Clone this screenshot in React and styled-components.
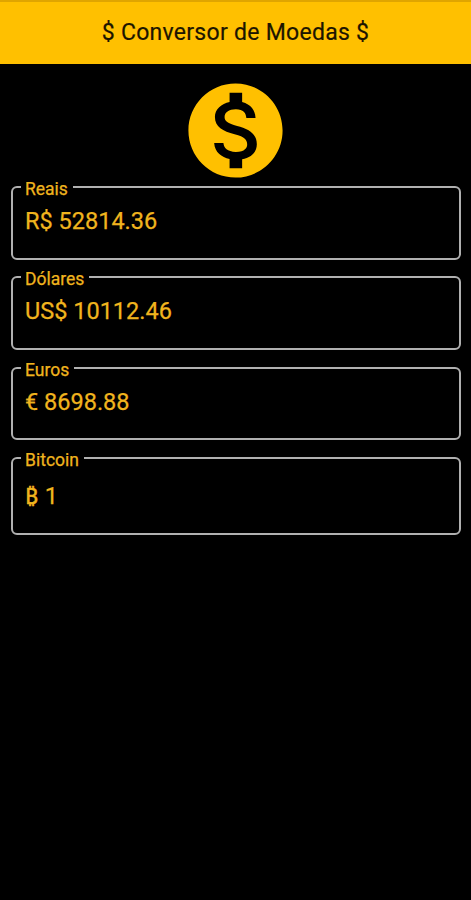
import React from "react";
import styled, { createGlobalStyle } from "styled-components";

const GlobalStyle = createGlobalStyle`
  body {
    margin: 0;
    background-color: #000;
  }
`;

const Screen = styled.div`
  min-height: 100vh;
  display: flex;
  flex-direction: column;
  background-color: #000;
  font-family: Roboto, "Liberation Sans", sans-serif;
`;

const AppBar = styled.header`
  box-sizing: border-box;
  height: 64px;
  display: flex;
  align-items: center;
  justify-content: center;
  background-color: #ffc000;
  border-top: 2px solid #e0a500;
`;

const Title = styled.h1`
  margin: 0;
  color: #1c1500;
  font-size: 23px;
  font-weight: 400;
  line-height: 28px;
  letter-spacing: 0.28px;
  white-space: nowrap;
  -webkit-text-stroke: 0.2px #1c1500;
`;

const Content = styled.main`
  display: flex;
  flex-direction: column;
  padding: 10px 10px 0 11px;
`;

const Coin = styled.svg`
  width: 113px;
  height: 113px;
  margin: 0 1px -10px 0;
  align-self: center;
  fill: #ffc000;
`;

// the top border runs through the middle of the legend
const Field = styled.fieldset`
  box-sizing: border-box;
  height: ${props => props.$height || 82.6}px;
  min-width: 0;
  margin: 0 0 7.8px;
  padding: 0 12px;
  border: 2px solid #b0b0b0;
  border-radius: 6px;
`;

const Label = styled.legend`
  box-sizing: border-box;
  height: 20px;
  margin-left: -4px;
  padding: 2px 5px 0 4px;
  color: #f0b41e;
  font-size: 17.5px;
  line-height: 20px;
  -webkit-text-stroke: 0.25px #f0b41e;
`;

const Value = styled.div`
  padding-top: ${props => props.$top || 10}px;
  color: #f0b41e;
  font-family: Roboto, "Noto Sans", "Liberation Sans", sans-serif;
  font-size: 23.5px;
  line-height: 28px;
  white-space: nowrap;
  -webkit-text-stroke: 0.25px #f0b41e;
`;

const BitcoinSign = styled.span`
  margin-right: 1px;
  font-family: "Open Sans", "Noto Sans", sans-serif;
  font-size: 22.5px;
  line-height: 1;
  -webkit-text-stroke: 0.5px #f0b41e;
`;

const currencies = [
  { label: "Reais", symbol: "R$", amount: "52814.36" },
  { label: "Dólares", symbol: "US$", amount: "10112.46" },
  { label: "Euros", symbol: "€", amount: "8698.88" },
  {
    label: "Bitcoin",
    symbol: <BitcoinSign>₿</BitcoinSign>,
    amount: "1",
    height: 87,
    top: 14,
  },
];

const App = () => {
  return (
    <>
      <GlobalStyle />
      <Screen>
        <AppBar>
          <Title>$ Conversor de Moedas $</Title>
        </AppBar>
        <Content>
          <Coin viewBox="0 0 24 24">
            <path d="M12 2C6.48 2 2 6.48 2 12s4.48 10 10 10 10-4.48 10-10S17.52 2 12 2zm1.41 16.09V20h-2.67v-1.93c-1.71-.36-3.16-1.46-3.27-3.4h1.96c.1 1.05.82 1.87 2.65 1.87 1.96 0 2.4-.98 2.4-1.59 0-.83-.44-1.61-2.67-2.14-2.48-.6-4.18-1.62-4.18-3.67 0-1.72 1.39-2.84 3.11-3.21V4h2.67v1.95c1.86.45 2.79 1.86 2.85 3.39H14.3c-.05-1.11-.64-1.87-2.22-1.87-1.5 0-2.4.68-2.4 1.64 0 .84.65 1.39 2.67 1.91s4.18 1.39 4.18 3.91c-.02 1.83-1.38 2.83-3.12 3.16z" />
          </Coin>
          {currencies.map(({ label, symbol, amount, height, top }) => (
            <Field key={label} $height={height}>
              <Label>{label}</Label>
              <Value $top={top}>
                {symbol} {amount}
              </Value>
            </Field>
          ))}
        </Content>
      </Screen>
    </>
  );
}

export default App
